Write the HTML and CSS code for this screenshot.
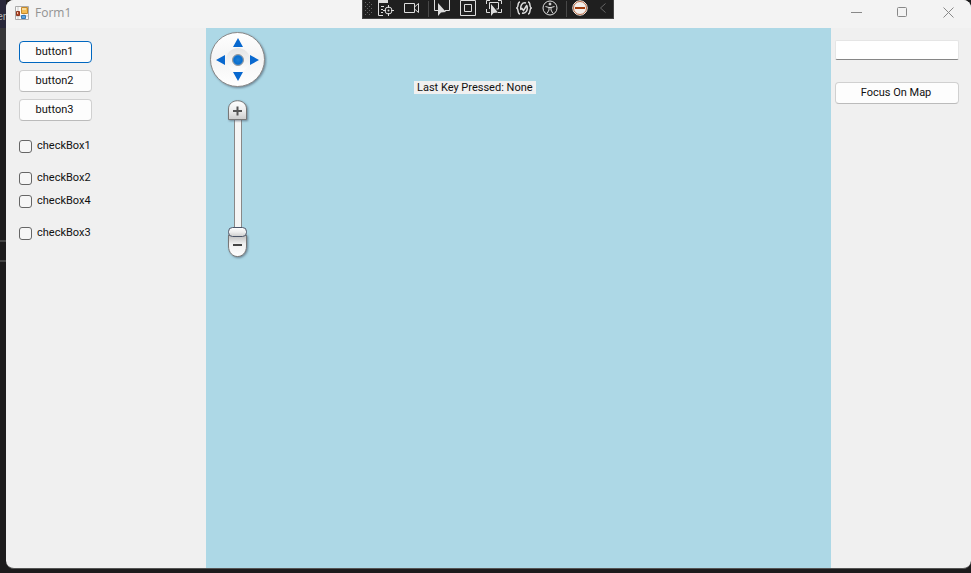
FILE: index.html
```html
<!DOCTYPE html>
<html lang="en">
<head>
<meta charset="utf-8">
<title>Form1</title>
<link rel="stylesheet" href="styles.css">
</head>
<body>
<div class="desktop">
  <div class="backdrop"><span class="backdrop-text">er</span><span class="backdrop-line"></span><span class="backdrop-line"></span></div>
  <main class="window">
    <header class="titlebar">
      <svg class="app-icon" width="14" height="14" viewBox="0 0 14 14">
        <path fill="#fafafa" stroke="#aaa" d="M.5.5h13v13H.5z"/>
        <path stroke="#ccc" d="M3 1v12M9 8v5M1 10h12"/>
        <path fill="#f5bd53" stroke="#c58a2c" d="M6.500 1.500h6v6h-6z"/>
        <path fill="#f9dc9d" d="M7 2h4v2H7z"/>
        <path fill="#b64c2c" stroke="#8e3720" d="M1.500 5.500h3v4h-3z"/>
        <path fill="#f3c4a8" d="M2 6h1v2H2z"/>
        <path fill="#5da5df" stroke="#3979b5" d="M6.500 9.500h4v3h-4z"/>
      </svg>
      <span class="title">Form1</span>
      <div class="window-controls">
        <button aria-label="Minimize"><svg width="11" height="11"><path d="M0 5.500h11"/></svg></button>
        <button aria-label="Maximize"><svg width="11" height="11"><rect x=".5" y=".5" width="9" height="9" rx="1"/></svg></button>
        <button aria-label="Close"><svg width="11" height="11"><path d="M.5.5l10 10M10.500.5l-10 10"/></svg></button>
      </div>
    </header>
    <div class="content">
      <section class="left-panel">
        <div class="button-list">
          <button class="push focused">button1</button>
          <button class="push">button2</button>
          <button class="push">button3</button>
        </div>
        <div class="check-group">
          <label><input type="checkbox">checkBox1</label>
        </div>
        <div class="check-group">
          <label><input type="checkbox">checkBox2</label>
          <label><input type="checkbox">checkBox4</label>
        </div>
        <div class="check-group">
          <label><input type="checkbox">checkBox3</label>
        </div>
      </section>
      <section class="map">
        <svg class="navigator" width="64" height="236" viewBox="0 0 64 236" role="img" aria-label="Map navigation">
          <defs>
            <linearGradient id="disc" x2="0" y2="1"><stop stop-color="#fff"/><stop offset=".5" stop-color="#f4f4f4"/><stop offset="1" stop-color="#fff"/></linearGradient>
            <linearGradient id="hub" x2="0" y2="1"><stop stop-color="#e4e4e4"/><stop offset="1" stop-color="#fff"/></linearGradient>
            <linearGradient id="cap" x2="0" y2="1"><stop stop-color="#fff"/><stop offset=".5" stop-color="#eee"/><stop offset="1" stop-color="#ccc"/></linearGradient>
            <linearGradient id="foot" x2="0" y2="1"><stop stop-color="#bbb"/><stop offset=".4" stop-color="#eee"/><stop offset="1" stop-color="#fff"/></linearGradient>
            <radialGradient id="dot"><stop stop-color="#207fd5"/><stop offset=".7" stop-color="#0b6fce"/><stop offset="1" stop-color="#4b8ed0"/></radialGradient>
            <filter id="shadow" x="-30%" y="-30%" width="160%" height="160%"><feDropShadow dx="1" dy="1" stdDeviation="1.200" flood-color="#456" flood-opacity=".65"/></filter>
          </defs>
          <circle cx="31.500" cy="31.500" r="27" fill="url(#disc)" stroke="#888" filter="url(#shadow)"/>
          <circle cx="32" cy="32" r="12" fill="url(#hub)"/>
          <circle cx="32" cy="32" r="5.500" fill="url(#dot)" stroke="#999" stroke-width="1"/>
          <path fill="#0868cf" d="M32 10l5 9H27zM32 53l5-9H27zM10 32l9-5v10zM53 32l-9-5v10z"/>
          <path fill="#f5f5f5" stroke="#888" d="M28.500 90v112h7V90z"/>
          <path fill="url(#cap)" stroke="#777" filter="url(#shadow)" d="M22.500 91.500V81c0-11 18-11 18 0v10.500z"/>
          <path fill="#555" d="M27 82h3.500v-3.500h2V82H36v2h-3.500v3.500h-2V84H27z"/>
          <path fill="url(#foot)" stroke="#777" filter="url(#shadow)" d="M22.500 207v11c0 14 18 14 18 0v-11z"/>
          <path fill="#444" d="M27 216h9v2h-9z"/>
          <rect x="22.500" y="199.500" width="18" height="9" rx="4" fill="url(#cap)" stroke="#4c5568"/>
        </svg>
        <span class="key-label">Last Key Pressed: None</span>
      </section>
      <section class="right-panel">
        <input class="text-box" type="text" aria-label="Text">
        <button class="push">Focus On Map</button>
      </section>
    </div>
  </main>
  <div class="debug-bar" role="toolbar" aria-label="Debug tools">
    <svg class="grip" width="8" height="18"><path stroke="#666" stroke-dasharray="1 3" d="M.5 2v14M4.500 2v14"/><path stroke="#666" stroke-dasharray="1 3" d="M2.500 4v12M6.500 4v12"/></svg>
    <button aria-label="Live visual tree"><svg width="16" height="18"><path fill="#ddd" stroke="none" d="M0 0h10v3H0z"/><path d="M.5 3v12.500H5M3 6.500h3M3 9.500h2M3 12.500h2"/><circle cx="10.500" cy="10.500" r="3.500"/><path d="M10.500 5v3M10.500 13v3M5 10.500h3M13 10.500h3"/><circle cx="10.500" cy="10.500" r="1" fill="#ddd" stroke="none"/></svg></button>
    <button aria-label="Record"><svg width="16" height="18"><path d="M.5 3.500h10v9H.5zM10.500 7l4-3.500v9l-4-3.500"/></svg></button>
    <i class="separator"></i>
    <button aria-label="Select element"><svg width="16" height="18"><path d="M4 10.500H.5V0M15.500 0v10.500H11"/><path fill="#ddd" stroke="none" d="M4 3v13l3-3.500 5-.5z"/></svg></button>
    <button aria-label="Layout adorners"><svg width="16" height="18"><path d="M.5.5h15v15H.5zM4.500 4.500h7v7h-7z"/></svg></button>
    <button aria-label="Track focused element"><svg width="16" height="18"><path d="M.5 4V.5H4M12 .5h3.500V4M15.500 9v3.500H12M.5 9v3.500H4M3.500 9V2.500h9V9h-2"/><path fill="#ddd" stroke="none" d="M5 4v12l2.500-3 4.500-.5z"/></svg></button>
    <i class="separator"></i>
    <button aria-label="Hot reload"><svg width="16" height="18"><path stroke-width="1.500" d="M4 2C1 2 3 7 .8 8 3 9 1 14 4 14M12 2c3 0 1 5 3.200 6-2.200 1-.2 6-3.200 6M10 3c-4-1-6 3-5 7M6 13c4 1 6-3 5-7M5.500 8l2 2.500L11 5"/></svg></button>
    <button aria-label="Accessibility"><svg width="16" height="18"><circle cx="8" cy="8" r="7"/><circle cx="8" cy="4" r="1" fill="#ddd"/><path d="M3.500 6.500L7 7.500h2l3.500-1M7 7.500V10l-2 3.500M9 7.500V10l2 3.500"/></svg></button>
    <i class="separator"></i>
    <button aria-label="Binding failures"><svg width="16" height="18"><circle cx="8" cy="8" r="7.200" fill="#f3efeb" stroke="#f5f0ea"/><circle cx="8" cy="8" r="6.500" stroke="#b86a45"/><path stroke="#a33b0b" stroke-width="2" d="M3 8h10"/></svg></button>
    <button class="collapse" aria-label="Collapse"><svg width="8" height="18"><path d="M6.500 3.500L1.500 8l5 4.500"/></svg></button>
  </div>
</div>
</body>
</html>
```
FILE: styles.css
```css
* { box-sizing: border-box; }
body {
  margin: 0;
  background: #1c1b1c;
  color: #111;
  font: 11px/14px Roboto, "Liberation Sans", sans-serif;
}
button { font: inherit; color: inherit; padding: 0; }
.desktop { position: relative; display: flex; min-height: 100vh; padding-bottom: 4px; }
.backdrop {
  width: 6px;
  overflow: hidden;
  background: linear-gradient(#29283a 28px, #363638 28px, #363638 50px, #1c1b1c 50px);
}
.backdrop-text { display: block; height: 240px; padding-top: 10px; color: #aaa; text-indent: -3px; }
.backdrop-line { display: block; height: 20px; border-top: 2px solid #444; }
.window {
  flex: 1;
  display: flex;
  flex-direction: column;
  overflow: hidden;
  background: #f0f0f0;
  border-bottom: 1px solid #555;
  border-radius: 8px;
}
.titlebar {
  display: flex;
  align-items: center;
  height: 28px;
  padding-left: 9px;
  padding-bottom: 3px;
  background: #f3f3f3;
}
.title { margin-left: 6px; color: #929292; font-family: "Open Sans", sans-serif; font-size: 12px; }
.window-controls { display: flex; margin-left: auto; }
.window-controls button {
  display: grid;
  place-items: center;
  width: 46px;
  height: 24px;
  border: 0;
  background: none;
}
.window-controls svg { fill: none; stroke: #888; }
.content { flex: 1; display: flex; }
.left-panel { width: 200px; padding: 13px; }
.button-list { display: grid; gap: 7px; width: 73px; margin-bottom: 16px; }
.push {
  height: 22px;
  padding-right: 2px;
  border: 1px solid #d0d0d0;
  border-bottom-color: #bbb;
  border-radius: 4px;
  background: #fdfdfd;
}
.push.focused { border-color: #0067c0; }
.check-group { display: grid; gap: 5px; margin-bottom: 14px; }
.check-group label { display: flex; align-items: center; gap: 5px; height: 18px; }
input[type="checkbox"] {
  appearance: none;
  width: 13px;
  height: 13px;
  margin: 0;
  border: 1px solid #666;
  border-radius: 3px;
  background: #f6f6f6;
}
.map { flex: 1; display: flex; align-items: flex-start; background: #add8e6; }
.key-label { margin: 53px 0 0 144px; padding: 0 3px; background: #f0f0f0; line-height: 13px; }
.right-panel { display: grid; align-content: start; gap: 22px; width: 140px; padding: 12px 12px 12px 4px; }
.text-box {
  width: 100%;
  height: 20px;
  border: 1px solid #e5e5e5;
  border-bottom-color: #868686;
  border-radius: 2px;
  background: #fff;
  font: inherit;
}
.debug-bar {
  position: absolute;
  top: 0;
  left: 362px;
  display: flex;
  height: 19px;
  padding-left: 2px;
  border: 1px solid #444;
  border-top: 0;
  background: #1f1f1f;
}
.debug-bar button { width: 26px; border: 0; background: none; display: grid; place-items: center; }
.debug-bar svg { fill: none; stroke: #ddd; }
.debug-bar .collapse { width: 20px; }
.debug-bar .collapse svg { stroke: #666; }
.separator { width: 4px; border-right: 1px solid #484848; margin: 1px 0; }
```
